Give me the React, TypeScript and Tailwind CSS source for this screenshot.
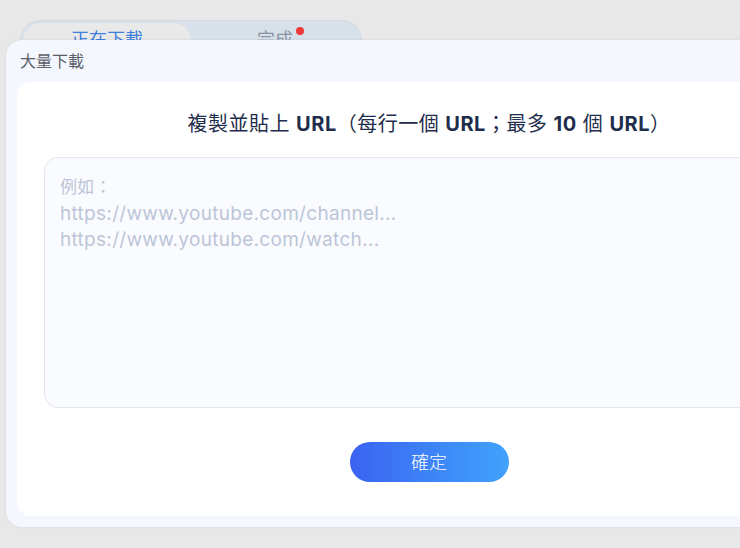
import React from "react";

const cjk = { fontFamily: '"Inter", "Noto Sans CJK TC", sans-serif' };

export default function App() {
  return (
    <div className="relative h-[548px] w-[740px] overflow-hidden bg-[#e8e8e8]" style={cjk}>
      {/* background tab bar */}
      <div className="ml-[20px] mt-[20px] flex h-[40px] w-[342px] rounded-t-[20px] border border-[#d3dae6] bg-[#d8e0ea] p-[2px]">
        <div className="flex h-[36px] w-[168px] items-start justify-center rounded-[18px] bg-[#e9e9e9] pt-[3px] text-[18px] text-[#3f7fdc]">
          正在下載
        </div>
        <div className="relative flex flex-1 items-start justify-center pt-[3px] text-[18px] text-[#8a93a3]">
          <span className="relative">
            完成
            <span className="absolute -right-[11px] top-[1px] h-[8px] w-[8px] rounded-full bg-[#ea3a3a]" />
          </span>
        </div>
      </div>

      {/* modal */}
      <div className="absolute left-[6px] top-[40px] flex h-[487px] w-[846px] flex-col rounded-[16px] bg-[#f4f7fd] px-[11px] pb-[11px] shadow-[0_0_3px_rgba(0,0,0,0.08)]">
        <div className="flex h-[42px] items-center pl-[3px] text-[16px] text-[#5b606b]">大量下載</div>
        <div className="flex flex-1 flex-col items-center rounded-[14px] bg-white px-[27px] pt-[27px]">
          <div className="text-[20px] leading-[30px] tracking-[0.5px] text-[#1f2d4d]">
            複製並貼上 <span className="font-bold">URL</span>（每行一個 <span className="font-bold">URL</span>；最多 <span className="font-bold">10</span> 個 <span className="font-bold">URL</span>）
          </div>
          <div className="mt-[18px] h-[251px] w-full rounded-[14px] border border-[#e3e6ee] bg-[#fafbfe] px-[15px] pt-[16px] text-[19px] leading-[26.5px] tracking-[0.3px] text-[#bcc5d8]">
            <div className="text-[17px]">例如：</div>
            <div>https://www.youtube.com/channel...</div>
            <div>https://www.youtube.com/watch...</div>
          </div>
          <button className="mt-[34px] flex h-[40px] w-[159px] items-center justify-center rounded-full bg-gradient-to-r from-[#3c62f2] to-[#41a2fb] text-[18px] font-light text-white">
            確定
          </button>
        </div>
      </div>
    </div>
  );
}
